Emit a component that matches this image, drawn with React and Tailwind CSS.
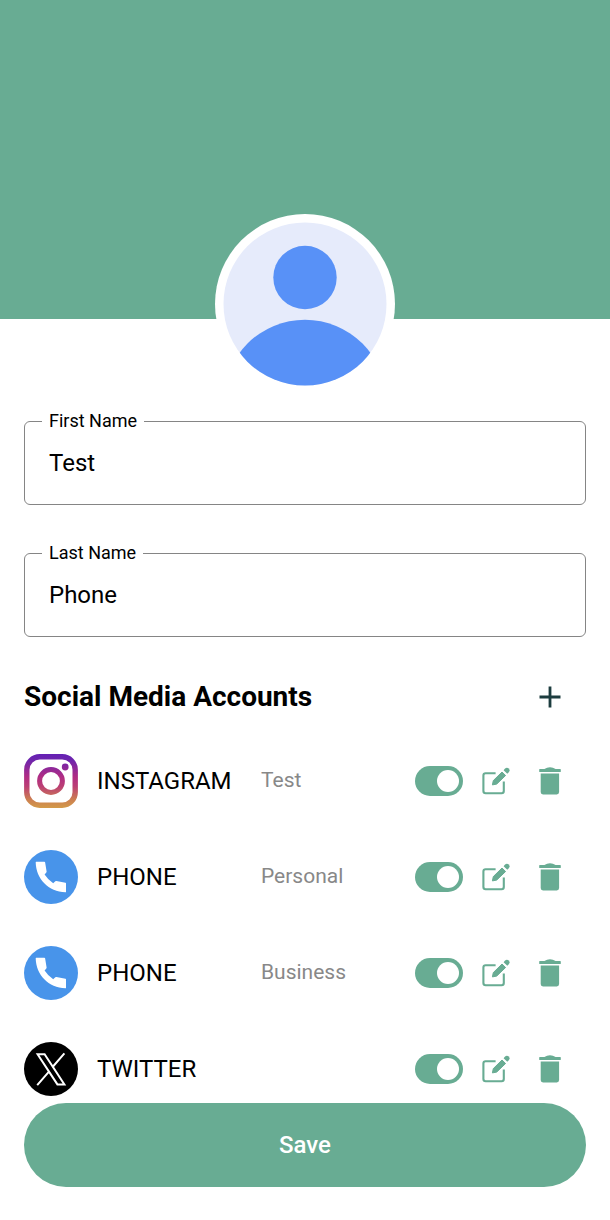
import { useId, useState } from "react";

function Avatar() {
  return (
    <svg viewBox="0 0 180 180" className="block size-[180px]" role="img" aria-label="Profile picture">
      <defs>
        <clipPath id="avatar-clip">
          <circle cx="90" cy="90" r="81.5" />
        </clipPath>
      </defs>
      <circle cx="90" cy="90" r="90" fill="#fff" />
      <g clipPath="url(#avatar-clip)">
        <rect width="180" height="180" fill="#e6ebfb" />
        <circle cx="90" cy="63.5" r="31.7" fill="#5891f7" />
        <circle cx="90" cy="187" r="81.3" fill="#5891f7" />
      </g>
    </svg>
  );
}

function InstagramIcon() {
  return (
    <svg viewBox="0 0 54 54" className="size-[54px]" aria-hidden="true">
      <defs>
        <linearGradient id="ig" gradientUnits="userSpaceOnUse" x1="27" y1="0" x2="27" y2="54">
          <stop offset="0" stopColor="#6420b4" />
          <stop offset="0.12" stopColor="#6f25ac" />
          <stop offset="0.42" stopColor="#b02c84" />
          <stop offset="0.6" stopColor="#bb3f74" />
          <stop offset="0.85" stopColor="#cc8050" />
          <stop offset="1" stopColor="#d39a48" />
        </linearGradient>
      </defs>
      <rect x="2.8" y="2.8" width="48.4" height="48.4" rx="13" fill="none" stroke="url(#ig)" strokeWidth="5.4" />
      <circle cx="27" cy="27" r="11.4" fill="none" stroke="url(#ig)" strokeWidth="5" />
      <circle cx="41.2" cy="13" r="3.4" fill="url(#ig)" />
    </svg>
  );
}

function PhoneIcon() {
  return (
    <svg viewBox="0 0 54 54" className="size-[54px]" aria-hidden="true">
      <circle cx="27" cy="27" r="27" fill="#4894ea" />
      <path
        d="M12.2 11.7H20.4Q21 11.7 21.1 12.3L22.6 21.6Q22.7 22.2 22.3 22.6L20.6 24.6Q24 30 29.2 33.2L31.3 31.2Q31.8 30.8 32.4 30.9L41.5 32.7Q42 32.8 42 33.4V41.8Q42 42.3 41.5 42.3C24.5 41.8 12 28.8 11.7 12.2Q11.7 11.7 12.2 11.7Z"
        fill="#fff"
      />
    </svg>
  );
}

function TwitterIcon() {
  return (
    <svg viewBox="0 0 54 54" className="size-[54px]" aria-hidden="true">
      <circle cx="27" cy="27" r="27" fill="#000" />
      <g fill="none" stroke="#fff" strokeWidth="2">
        <path d="M13.6 12.2H20.6L40.4 42.4H33.4Z" />
        <path d="M40.4 11.4L28.6 25M13.2 43.2L25.2 29.4" />
      </g>
    </svg>
  );
}

function EditIcon() {
  return (
    <svg viewBox="0 0 28 28" className="size-7" aria-hidden="true">
      <path
        d="M13.6 6.2H3.6Q1.4 6.2 1.4 8.4V24Q1.4 26.2 3.6 26.2H19.6Q21.8 26.2 21.8 24V14.4"
        fill="none"
        stroke="currentColor"
        strokeWidth="2.1"
      />
      <path d="M10.4 17.9L11.3 13.6L20 5L23.6 8.5L14.7 17.1Z" fill="currentColor" stroke="currentColor" strokeWidth="1" strokeLinejoin="round" />
      <path d="M21.6 3.3L22.8 1.8Q24.8 -0.2 26.8 1.5Q28.4 3.4 26.7 5.3L25.3 6.8Z" fill="currentColor" />
    </svg>
  );
}

function TrashIcon() {
  return (
    <svg viewBox="0 0 22 28" className="h-7 w-[22px]" fill="currentColor" aria-hidden="true">
      <path d="M0.8 2H5.4Q8 0.3 11 0.3T16.6 2H21.2Q21.8 2 21.8 2.6V4.4Q21.8 5 21.2 5H0.8Q0.2 5 0.2 4.4V2.6Q0.2 2 0.8 2Z" />
      <path d="M1.7 6.4H20.1V25Q20.1 27.4 17.8 27.4H4Q1.7 27.4 1.7 25Z" />
    </svg>
  );
}

function Field({ label, value }) {
  const id = useId();
  return (
    <div className="relative">
      <label htmlFor={id} className="absolute -top-3 left-[18px] bg-white px-[7px] text-lg leading-6 text-black">
        {label}
      </label>
      <input
        id={id}
        type="text"
        defaultValue={value}
        className="block h-[84px] w-full rounded-md border border-[#858585] bg-white px-6 text-2xl text-black outline-none"
      />
    </div>
  );
}

function Account({ icon: Icon, name, note }) {
  const [on, setOn] = useState(true);
  const title = `${name} ${note}`.trim();
  return (
    <li className="flex h-[54px] items-center text-[#68ac93]">
      <Icon />
      <span className="ml-[19px] w-[164px] text-2xl text-black">{name}</span>
      <span className="flex-1 text-[21px] text-[#888]">{note}</span>
      <input
        type="checkbox"
        role="switch"
        aria-label={`Show ${title}`}
        checked={on}
        onChange={(e) => setOn(e.target.checked)}
        className="flex h-[30px] w-12 cursor-pointer appearance-none items-center rounded-full bg-[#b5b5b5] px-1 before:size-[22px] before:rounded-full before:bg-white checked:justify-end checked:bg-[#68ac93]"
      />
      <button type="button" aria-label={`Edit ${title}`} className="ml-[19px] cursor-pointer">
        <EditIcon />
      </button>
      <button type="button" aria-label={`Delete ${title}`} className="mr-[25px] ml-[29px] cursor-pointer">
        <TrashIcon />
      </button>
    </li>
  );
}

const accounts = [
  { icon: InstagramIcon, name: "INSTAGRAM", note: "Test" },
  { icon: PhoneIcon, name: "PHONE", note: "Personal" },
  { icon: PhoneIcon, name: "PHONE", note: "Business" },
  { icon: TwitterIcon, name: "TWITTER", note: "" },
];

export default function App() {
  return (
    <main className="min-h-screen bg-white font-['Roboto',sans-serif]">
      <header className="h-[319px] bg-[#68ac93]" />
      <div className="-mt-[105px] flex justify-center">
        <Avatar />
      </div>
      <form className="px-6 pt-[27px] pb-8" onSubmit={(e) => e.preventDefault()}>
        <div className="flex flex-col gap-12">
          <Field label="First Name" value="Test" />
          <Field label="Last Name" value="Phone" />
        </div>
        <div className="mt-10 flex h-10 items-center justify-between">
          <h1 className="text-[28px] leading-10 font-bold text-black">Social Media Accounts</h1>
          <button type="button" aria-label="Add account" className="mr-[25px] cursor-pointer">
            <svg viewBox="0 0 22 22" className="size-[22px]" aria-hidden="true">
              <path d="M11 0.5V21.5M0.5 11H21.5" stroke="#1d3d3f" strokeWidth="2.8" />
            </svg>
          </button>
        </div>
        <ul className="mt-[37px] flex flex-col gap-[42px]">
          {accounts.map((account, i) => (
            <Account key={i} {...account} />
          ))}
        </ul>
        <button type="submit" className="mt-[7px] h-[84px] w-full cursor-pointer rounded-full bg-[#68ac93] text-2xl font-medium text-white">
          Save
        </button>
      </form>
    </main>
  );
}
